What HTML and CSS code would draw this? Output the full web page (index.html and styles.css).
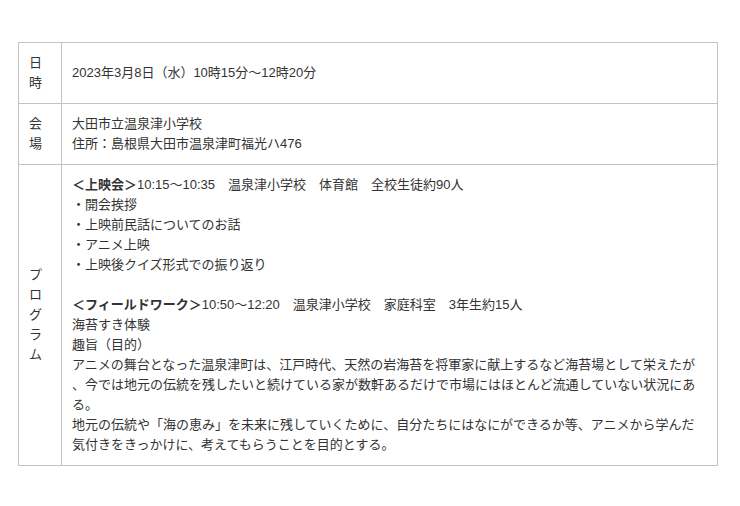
FILE: index.html
```html
<!DOCTYPE html>
<html lang="ja">
<head>
<meta charset="utf-8">
<link rel="stylesheet" href="styles.css">
</head>
<body>
<div class="page">
  <table class="info">
    <colgroup><col class="col-head"><col></colgroup>
    <tr>
      <th class="head">日時</th>
      <td class="body">2023年3月8日（水）10時15分～12時20分</td>
    </tr>
    <tr>
      <th class="head">会場</th>
      <td class="body">大田市立温泉津小学校<br>住所：島根県大田市温泉津町福光ハ476</td>
    </tr>
    <tr>
      <th class="head">プログラム</th>
      <td class="body"><b class="em">＜上映会＞</b>10:15～10:35　温泉津小学校　体育館　全校生徒約90人<br>・開会挨拶<br>・上映前民話についてのお話<br>・アニメ上映<br>・上映後クイズ形式での振り返り<br><br><b class="em">＜フィールドワーク＞</b>10:50～12:20　温泉津小学校　家庭科室　3年生約15人<br>海苔すき体験<br>趣旨（目的）<br>アニメの舞台となった温泉津町は、江戸時代、天然の岩海苔を将軍家に献上するなど海苔場として栄えたが<br>、今では地元の伝統を残したいと続けている家が数軒あるだけで市場にはほとんど流通していない状況にあ<br>る。<br>地元の伝統や「海の恵み」を未来に残していくために、自分たちにはなにができるか等、アニメから学んだ<br>気付きをきっかけに、考えてもらうことを目的とする。</td>
    </tr>
  </table>
</div>
</body>
</html>
```
FILE: styles.css
```css
html, body {
  margin: 0;
  padding: 0;
  background: #fff;
}
.page {
  padding: 42px 0 0 18px;
}
.info {
  width: 700px;
  border-collapse: collapse;
  table-layout: fixed;
  font-family: "Liberation Sans", "Noto Sans CJK JP", sans-serif;
  font-size: 13px;
  line-height: 20px;
  color: #333;
}
.col-head {
  width: 43px;
}
.info th, .info td {
  border: 1px solid #c2c2c2;
  padding: 10px 10px;
  vertical-align: middle;
  text-align: left;
  font-weight: normal;
}
.head {
  padding-left: 11px;
  padding-right: 9px;
}
.body {
  white-space: normal;
}
.em {
  font-weight: bold;
}
```
